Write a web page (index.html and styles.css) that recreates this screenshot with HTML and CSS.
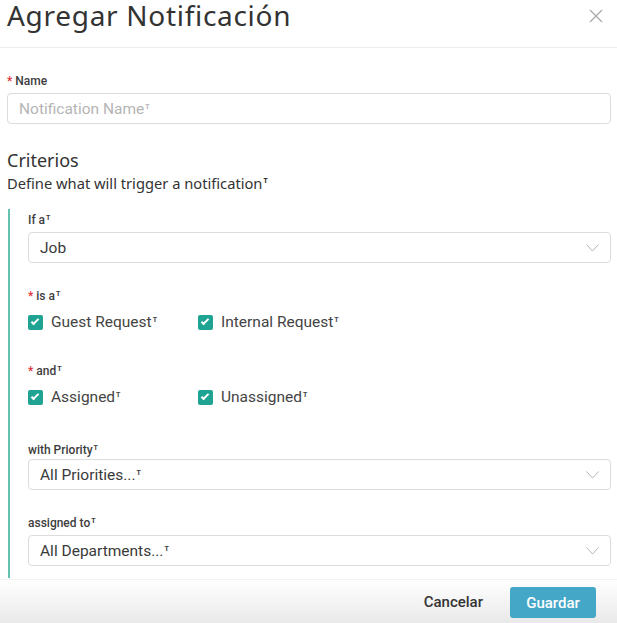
FILE: index.html
```html
<!DOCTYPE html>
<html>
<head>
<meta charset="utf-8">
<title>Agregar Notificación</title>
<link rel="stylesheet" href="styles.css">
</head>
<body>
<div class="modal">
  <div class="modal-header">
    <h1 class="modal-title">Agregar Notificación</h1>
    <span class="close">
      <svg width="14" height="14" viewBox="0 0 14 14"><path d="M1 1L13 13M13 1L1 13" stroke="#a8a8a8" stroke-width="1.3" fill="none"/></svg>
    </span>
  </div>
  <div class="modal-body">
    <div class="field">
      <label class="label"><span class="req">*</span> Name</label>
      <div class="input placeholder">Notification Name<sup>T</sup></div>
    </div>

    <h2 class="section-title">Criterios</h2>
    <p class="section-sub">Define what will trigger a notification<sup>T</sup></p>

    <div class="criteria">
      <div class="field">
        <label class="label">If a<sup>T</sup></label>
        <div class="input select">Job<svg class="chev" width="13" height="8" viewBox="0 0 13 8"><path d="M0.5 0.5L6.5 7L12.5 0.5" stroke="#b5b5b5" fill="none"/></svg></div>
      </div>

      <div class="field f-is">
        <label class="label"><span class="req">*</span> is a<sup>T</sup></label>
        <div class="checks">
          <span class="check"><span class="box"></span>Guest Request<sup>T</sup></span>
          <span class="check"><span class="box"></span>Internal Request<sup>T</sup></span>
        </div>
      </div>

      <div class="field f-and">
        <label class="label"><span class="req">*</span> and<sup>T</sup></label>
        <div class="checks">
          <span class="check"><span class="box"></span>Assigned<sup>T</sup></span>
          <span class="check"><span class="box"></span>Unassigned<sup>T</sup></span>
        </div>
      </div>

      <div class="field f-prio">
        <label class="label">with Priority<sup>T</sup></label>
        <div class="input select">All Priorities...<sup>T</sup><svg class="chev" width="13" height="8" viewBox="0 0 13 8"><path d="M0.5 0.5L6.5 7L12.5 0.5" stroke="#b5b5b5" fill="none"/></svg></div>
      </div>

      <div class="field f-dept">
        <label class="label">assigned to<sup>T</sup></label>
        <div class="input select">All Departments...<sup>T</sup><svg class="chev" width="13" height="8" viewBox="0 0 13 8"><path d="M0.5 0.5L6.5 7L12.5 0.5" stroke="#b5b5b5" fill="none"/></svg></div>
      </div>
    </div>
  </div>
  <div class="modal-footer">
    <button class="btn-link">Cancelar</button>
    <button class="btn-primary">Guardar</button>
  </div>
</div>
</body>
</html>
```

FILE: styles.css
```css
html, body {
  margin: 0;
  height: 100%;
  overflow: hidden;
  background: #fff;
}
body {
  font-family: Roboto, "Liberation Sans", sans-serif;
  color: #3a3a3a;
}
*, *:before, *:after { box-sizing: border-box; }
sup {
  font-size: 7px;
  font-weight: 700;
  vertical-align: top;
  position: relative;
  top: -2px;
  margin-left: 1px;
}

.modal {
  display: flex;
  flex-direction: column;
  height: 623px;
}
.modal-header {
  height: 48px;
  border-bottom: 1px solid #ececec;
  display: flex;
  justify-content: space-between;
  align-items: flex-start;
  padding: 0 14px 0 7px;
  flex: none;
}
.modal-title {
  margin: -1px 0 0;
  font-family: "Noto Sans", "Open Sans", sans-serif;
  font-weight: 400;
  font-size: 28px;
  letter-spacing: 0.7px;
  color: #333;
  line-height: 32px;
}
.close {
  margin-top: 8px;
}

.modal-body {
  flex: 1;
  overflow: hidden;
  padding: 25px 6px 0 7px;
}
.label {
  display: block;
  font-size: 12px;
  font-weight: 500;
  color: #3d3d3d;
  line-height: 16px;
  margin-bottom: 4px;
}
.req { color: #e0323c; }
.input {
  height: 31px;
  border: 1px solid #dcdcdc;
  border-radius: 4px;
  padding: 0 11px;
  display: flex;
  align-items: center;
  font-size: 15.5px;
  color: #3a3a3a;
  position: relative;
}
.placeholder { color: #b5b5b5; }
.chev {
  position: absolute;
  right: 11px;
  top: 11px;
}

.section-title {
  margin: 25px 0 0;
  font-family: "Noto Sans", "Open Sans", sans-serif;
  font-weight: 400;
  font-size: 18px;
  line-height: 22px;
  color: #333;
}
.section-sub {
  margin: 2px 0 0;
  font-family: "Noto Sans", "Open Sans", sans-serif;
  font-size: 14.7px;
  line-height: 20px;
  color: #333;
}

.criteria {
  margin-top: 16px;
  margin-left: 1px;
  border-left: 2px solid #67c1b0;
  padding: 3px 0 12px 18px;
}
.f-is { margin-top: 25px; }
.f-and { margin-top: 30px; }
.f-prio { margin-top: 34px; }
.f-prio .label { margin-bottom: 1px; }
.f-dept { margin-top: 25px; }
.checks {
  display: flex;
  height: 22px;
  align-items: center;
  margin-top: 7px;
}
.check {
  width: 170px;
  display: flex;
  align-items: center;
  font-size: 15.5px;
  color: #444;
}
.box {
  width: 15px;
  height: 15px;
  border-radius: 2px;
  background: #1fa393;
  margin-right: 8px;
  position: relative;
  flex: none;
}
.box:after {
  content: "";
  position: absolute;
  left: 5px;
  top: 2px;
  width: 4px;
  height: 8px;
  border-right: 2px solid #fff;
  border-bottom: 2px solid #fff;
  transform: rotate(45deg);
}

.modal-footer {
  height: 44px;
  flex: none;
  display: flex;
  justify-content: flex-end;
  align-items: center;
  gap: 27px;
  padding: 0 21px 0 0;
  border-top: 1px solid #f2f2f2;
  background: linear-gradient(#ffffff, #e9e9e9);
}
.btn-link {
  border: 0;
  background: none;
  font-family: Roboto, sans-serif;
  font-weight: 500;
  font-size: 15px;
  color: #333;
  padding: 0;
}
.btn-primary {
  border: 0;
  border-radius: 3px;
  background: #45a7c8;
  color: #fff;
  font-family: Roboto, sans-serif;
  font-weight: 500;
  font-size: 15px;
  width: 86px;
  height: 31px;
  margin-top: 2px;
}
```
